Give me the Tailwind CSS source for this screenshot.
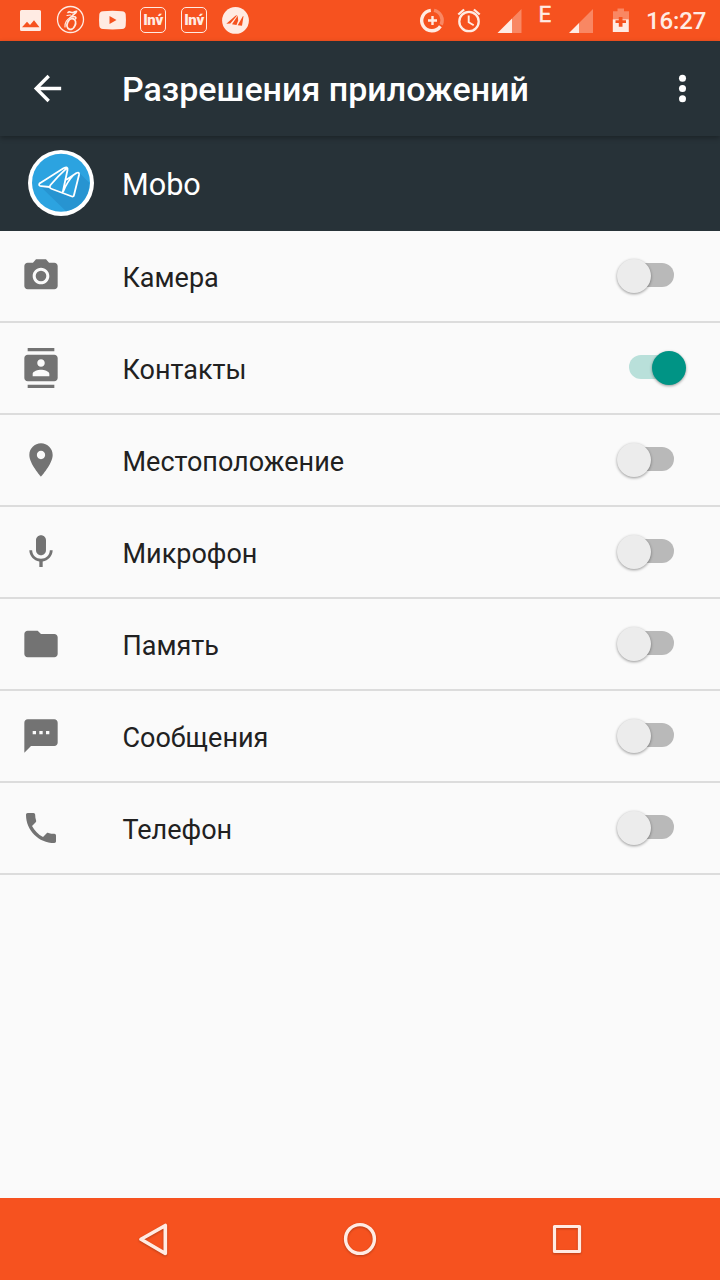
<!DOCTYPE html>
<html lang="ru">
<head>
<meta charset="utf-8">
<title>Разрешения приложений</title>
<script src="https://cdn.jsdelivr.net/npm/@tailwindcss/browser@4"></script>
</head>
<body class="w-[720px] h-[1280px] overflow-hidden bg-[#fafafa] font-[Roboto,sans-serif] flex flex-col">

<!-- Status bar -->
<div class="h-[41px] shrink-0 bg-[#f6521f] text-[#ffebe3] flex items-start justify-between">
  <div class="flex pl-[10px] h-[41px] items-center">
    <svg class="w-[41px] h-[41px]" viewBox="0 0 41 41" fill="currentColor"><path fill-rule="evenodd" d="M11.500 10h18a1.500 1.500 0 0 1 1.500 1.500v18a1.500 1.500 0 0 1-1.500 1.500h-18a1.500 1.500 0 0 1-1.500-1.500v-18a1.500 1.500 0 0 1 1.500-1.500zM12 27.300h17.500l-5.500-7-4 4.700-3-3.200z"/></svg>
    <svg class="w-[41px] h-[41px]" viewBox="0 0 41 41" fill="none" stroke="currentColor" stroke-linecap="round"><circle cx="19.500" cy="19.500" r="13" stroke-width="1.300"/><path stroke-width="1.700" d="M17 12.500c1.500-1.500 3 .3 5 0 1.500-.3 2.500-1.600 3.500-1.200-.2 1.800-3.300 3.200-5.500 5.700 3-1 5.800-.3 4.500 1.700"/><ellipse cx="20.300" cy="24" rx="4" ry="5.600" transform="rotate(22 20.300 24)" stroke-width="1.900"/><path stroke-width="1.200" d="M19.500 17.500c-3.500 2-6 5.500-5.500 9.500M16 15.500l3.500-.5"/></svg>
    <svg class="w-[41px] h-[41px]" viewBox="0 0 41 41" fill="currentColor"><path fill-rule="evenodd" d="M11 11.200q9.500-.8 19 0q3.500.2 3.700 3.300q.5 5.500 0 11q-.2 3.300-3.700 3.500q-9.500.8-19 0q-3.500-.2-3.700-3.500q-.5-5.500 0-11q.2-3.100 3.700-3.300zM17.500 16v8l7-4z"/></svg>
    <div class="w-[41px] h-[41px] flex items-center justify-center pr-px pb-px"><div class="w-[26px] h-[26px] rounded-[5px] border border-[#ffebe3] flex items-center justify-center text-[15px] leading-none tracking-[-0.4px] font-black pt-px">Inv́</div></div>
    <div class="w-[41px] h-[41px] flex items-center justify-center pr-px pb-px"><div class="w-[26px] h-[26px] rounded-[5px] border border-[#ffebe3] flex items-center justify-center text-[15px] leading-none tracking-[-0.4px] font-black pt-px">Inv́</div></div>
    <svg class="w-[41px] h-[41px]" viewBox="0 0 41 41"><circle cx="20.500" cy="20.400" r="13.400" fill="currentColor"/><g fill="#f6521f"><path d="M11.300 23.700 20.500 15.800l2-.8-7.200 8.500zM17 24.200l5.700-8.500.5 4.800-1.700 4.500zM22.700 25.200l5.300-9.200.5.300-1.500 9.500z"/></g></svg>
  </div>
  <svg class="w-[230px] h-[41px] ml-auto" viewBox="416 0 230 41">
    <g fill="none" stroke="currentColor"><path stroke-width="3.400" d="M430.800 10.400a10.200 10.200 0 1 0 9.600 15.800"/><path stroke-width="3.400" opacity=".35" d="M434 10.400a10.200 10.200 0 0 1 7.200 14.300"/><path stroke-width="2.400" d="M432.500 16v9M428 20.500h9"/>
    <circle cx="469" cy="21.500" r="9.700" stroke-width="2.300"/><path stroke-width="2.300" d="m458.300 14.500 5.800-5M479.700 14.500l-5.800-5"/><path stroke-width="1.900" d="M468.700 15.500v6.700l5 3"/></g>
    <g fill="currentColor"><path opacity=".35" d="M521.500 9v24H512V18.500z"/><path d="M512 18.500V33h-14.500z"/><path opacity=".35" d="M593 9v24h-14V23z"/><path d="M579 23v10h-10z"/>
    <path opacity=".35" d="M613 19.300v-8h4.500V8.500h6.500v2.800h5v8z"/><path d="M612.800 19.300h16V32h-16z"/><path d="M615.500 20.300h3.300V17h3.700v3.300h3.500v2.800h-3.500v3.700h-3.700v-3.700h-3.300z" fill="#f6521f"/></g>
    <text x="538.500" y="22" font-size="22.500" stroke="currentColor" stroke-width=".4" fill="currentColor" font-family="Roboto">E</text>
  </svg>
  <div class="w-[74px] pt-px text-[24px] leading-[40px] font-medium tracking-[-0.1px] whitespace-nowrap">16:27</div>
</div>

<!-- App bar -->
<header class="relative z-10 h-[95px] shrink-0 bg-[#273238] text-white flex items-center shadow-[0_2px_5px_rgba(0,0,0,0.3)]">
  <svg class="w-[41px] h-[41px] ml-[27px]" viewBox="0 0 24 24" fill="currentColor"><path d="M20 11H7.830l5.590-5.590L12 4l-8 8 8 8 1.410-1.410L7.830 13H20v-2z"/></svg>
  <h1 class="ml-[54px] text-[34px] leading-[40px] font-medium whitespace-nowrap">Разрешения приложений</h1>
  <svg class="w-[41px] h-[41px] ml-auto mr-[17px]" viewBox="0 0 24 24" fill="currentColor"><circle cx="12" cy="6" r="2.050"/><circle cx="12" cy="12" r="2.050"/><circle cx="12" cy="18" r="2.050"/></svg>
</header>

<!-- Application -->
<div class="h-[95px] shrink-0 bg-[#273238] text-white flex items-center pl-[28px]">
  <svg class="w-[66px] h-[66px] mb-px" viewBox="0 0 66 66"><circle cx="33" cy="33" r="33" fill="#fff"/><circle cx="33" cy="32.700" r="29" fill="#2ca3e0"/><path d="M12 36 22 37l25 10 4-24.500 10.500 10.500A29 29 0 0 1 38 61.300z" fill="#248bc7" opacity=".6"/><path d="M11.500 33.500 35.500 18.300Q40.300 15.800 39.500 20L34.700 42.500M11.500 33.500Q10.300 36 13 36.200L21.500 37M38.500 18.300Q29 27 22.500 35Q20.500 38 24 39L44 46.500Q45.500 47 46 45L51 25Q51.500 21.500 48.500 23L38.800 29.500M45.500 25Q39 32 35.500 41" fill="none" stroke="#fff" stroke-width="1.800" stroke-linejoin="round" stroke-linecap="round"/></svg>
  <div class="ml-[28px] pt-[3px] text-[30.6px] leading-[40px]">Mobo</div>
</div>

<!-- Permissions -->
<main class="flex-1 text-[27px] text-[#212121]">
  <div class="h-[92px] border-b-2 border-[#dcdcdc] flex items-center pl-[20.5px]">
    <svg class="w-[40px] h-[40px] text-[#737373]" viewBox="0 0 24 24" fill="currentColor"><circle cx="12" cy="12" r="3.200"/><path d="M9 2 7.170 4H4c-1.100 0-2 .9-2 2v12c0 1.100.9 2 2 2h16c1.100 0 2-.9 2-2V6c0-1.100-.9-2-2-2h-3.170L15 2H9zm3 15c-2.760 0-5-2.240-5-5s2.240-5 5-5 5 2.240 5 5-2.240 5-5 5z"/></svg>
    <span class="ml-[62px] pt-[5px]">Камера</span>
    <div class="ml-auto mr-[46px] mb-[2px] w-[45px] h-[24px] rounded-full bg-[#b9b9b9] flex items-center"><div class="-ml-[12px] mt-px w-[34px] h-[34px] shrink-0 rounded-full bg-[#ececec] shadow-[0_1px_3px_rgba(0,0,0,0.4)]"></div></div>
  </div>
  <div class="h-[92px] border-b-2 border-[#dcdcdc] flex items-center pl-[20.5px]">
    <svg class="w-[40px] h-[40px] text-[#737373]" viewBox="0 0 24 24" fill="currentColor"><path d="M20 0H4v2h16V0zM4 24h16v-2H4v2zM20 4H4c-1.100 0-2 .9-2 2v12c0 1.100.9 2 2 2h16c1.100 0 2-.9 2-2V6c0-1.100-.9-2-2-2zm-8 2.750c1.240 0 2.250 1.010 2.250 2.250s-1.010 2.250-2.250 2.250S9.750 10.240 9.750 9 10.760 6.750 12 6.750zM17 17H7v-1.500c0-1.670 3.330-2.500 5-2.500s5 .83 5 2.500V17z"/></svg>
    <span class="ml-[62px] pt-[5px]">Контакты</span>
    <div class="ml-auto mr-[46px] mb-[2px] w-[45px] h-[24px] rounded-full bg-[#b9e0da] flex items-center justify-end"><div class="-mr-[12px] mt-px w-[34px] h-[34px] shrink-0 rounded-full bg-[#009485] shadow-[0_1px_3px_rgba(0,0,0,0.4)]"></div></div>
  </div>
  <div class="h-[92px] border-b-2 border-[#dcdcdc] flex items-center pl-[20.5px]">
    <svg class="w-[40px] h-[40px] text-[#737373]" viewBox="0 0 24 24" fill="currentColor"><path d="M12 2C8.130 2 5 5.130 5 9c0 5.250 7 13 7 13s7-7.750 7-13c0-3.870-3.130-7-7-7zm0 9.500c-1.380 0-2.500-1.120-2.500-2.500s1.120-2.500 2.500-2.500 2.500 1.120 2.500 2.500-1.120 2.500-2.500 2.500z"/></svg>
    <span class="ml-[62px] pt-[5px]">Местоположение</span>
    <div class="ml-auto mr-[46px] mb-[2px] w-[45px] h-[24px] rounded-full bg-[#b9b9b9] flex items-center"><div class="-ml-[12px] mt-px w-[34px] h-[34px] shrink-0 rounded-full bg-[#ececec] shadow-[0_1px_3px_rgba(0,0,0,0.4)]"></div></div>
  </div>
  <div class="h-[92px] border-b-2 border-[#dcdcdc] flex items-center pl-[20.5px]">
    <svg class="w-[40px] h-[40px] text-[#737373]" viewBox="0 0 24 24" fill="currentColor"><path d="M12 14c1.660 0 2.990-1.340 2.990-3L15 5c0-1.660-1.340-3-3-3S9 3.340 9 5v6c0 1.660 1.340 3 3 3zm5.300-3c0 3-2.540 5.100-5.300 5.100S6.700 14 6.700 11H5c0 3.410 2.720 6.230 6 6.720V21h2v-3.280c3.280-.48 6-3.300 6-6.720h-1.700z"/></svg>
    <span class="ml-[62px] pt-[5px]">Микрофон</span>
    <div class="ml-auto mr-[46px] mb-[2px] w-[45px] h-[24px] rounded-full bg-[#b9b9b9] flex items-center"><div class="-ml-[12px] mt-px w-[34px] h-[34px] shrink-0 rounded-full bg-[#ececec] shadow-[0_1px_3px_rgba(0,0,0,0.4)]"></div></div>
  </div>
  <div class="h-[92px] border-b-2 border-[#dcdcdc] flex items-center pl-[20.5px]">
    <svg class="w-[40px] h-[40px] text-[#737373]" viewBox="0 0 24 24" fill="currentColor"><path d="M10 4H4c-1.100 0-1.990.9-1.990 2L2 18c0 1.100.9 2 2 2h16c1.100 0 2-.9 2-2V8c0-1.100-.9-2-2-2h-8l-2-2z"/></svg>
    <span class="ml-[62px] pt-[5px]">Память</span>
    <div class="ml-auto mr-[46px] mb-[2px] w-[45px] h-[24px] rounded-full bg-[#b9b9b9] flex items-center"><div class="-ml-[12px] mt-px w-[34px] h-[34px] shrink-0 rounded-full bg-[#ececec] shadow-[0_1px_3px_rgba(0,0,0,0.4)]"></div></div>
  </div>
  <div class="h-[92px] border-b-2 border-[#dcdcdc] flex items-center pl-[20.5px]">
    <svg class="w-[40px] h-[40px] text-[#737373]" viewBox="0 0 24 24" fill="currentColor"><path d="M20 2H4c-1.100 0-1.990.9-1.990 2L2 22l4-4h14c1.100 0 2-.9 2-2V4c0-1.100-.9-2-2-2zM9 11H7V9h2v2zm4 0h-2V9h2v2zm4 0h-2V9h2v2z"/></svg>
    <span class="ml-[62px] pt-[5px]">Сообщения</span>
    <div class="ml-auto mr-[46px] mb-[2px] w-[45px] h-[24px] rounded-full bg-[#b9b9b9] flex items-center"><div class="-ml-[12px] mt-px w-[34px] h-[34px] shrink-0 rounded-full bg-[#ececec] shadow-[0_1px_3px_rgba(0,0,0,0.4)]"></div></div>
  </div>
  <div class="h-[92px] border-b-2 border-[#dcdcdc] flex items-center pl-[20.5px]">
    <svg class="w-[40px] h-[40px] text-[#737373]" viewBox="0 0 24 24" fill="currentColor"><path d="M6.620 10.790c1.440 2.830 3.760 5.140 6.590 6.590l2.200-2.200c.27-.27.67-.36 1.020-.24 1.120.37 2.330.57 3.570.57.55 0 1 .45 1 1V20c0 .55-.45 1-1 1-9.390 0-17-7.610-17-17 0-.55.45-1 1-1h3.500c.55 0 1 .45 1 1 0 1.250.2 2.450.57 3.570.11.35.03.74-.25 1.020l-2.200 2.200z"/></svg>
    <span class="ml-[62px] pt-[5px]">Телефон</span>
    <div class="ml-auto mr-[46px] mb-[2px] w-[45px] h-[24px] rounded-full bg-[#b9b9b9] flex items-center"><div class="-ml-[12px] mt-px w-[34px] h-[34px] shrink-0 rounded-full bg-[#ececec] shadow-[0_1px_3px_rgba(0,0,0,0.4)]"></div></div>
  </div>
</main>

<!-- Navigation bar -->
<nav class="h-[82px] shrink-0 bg-[#f6521f] text-[#ffebe3] flex items-center justify-between pl-[133px] pr-[133px]">
  <svg class="w-[40px] h-[40px] drop-shadow-[0_1px_1px_rgba(0,0,0,0.25)]" viewBox="0 0 40 40" fill="none" stroke="currentColor" stroke-width="3.600" stroke-linejoin="round"><path d="M32.300 6.500v28L8 20.300z"/></svg>
  <svg class="w-[40px] h-[40px] drop-shadow-[0_1px_1px_rgba(0,0,0,0.25)]" viewBox="0 0 40 40" fill="none" stroke="currentColor" stroke-width="3.400"><circle cx="20" cy="20" r="14.400"/></svg>
  <svg class="w-[40px] h-[40px] drop-shadow-[0_1px_1px_rgba(0,0,0,0.25)]" viewBox="0 0 40 40" fill="none" stroke="currentColor" stroke-width="3.200" stroke-linejoin="round"><path d="M7.500 7.500h25v25h-25z"/></svg>
</nav>
</body>
</html>
